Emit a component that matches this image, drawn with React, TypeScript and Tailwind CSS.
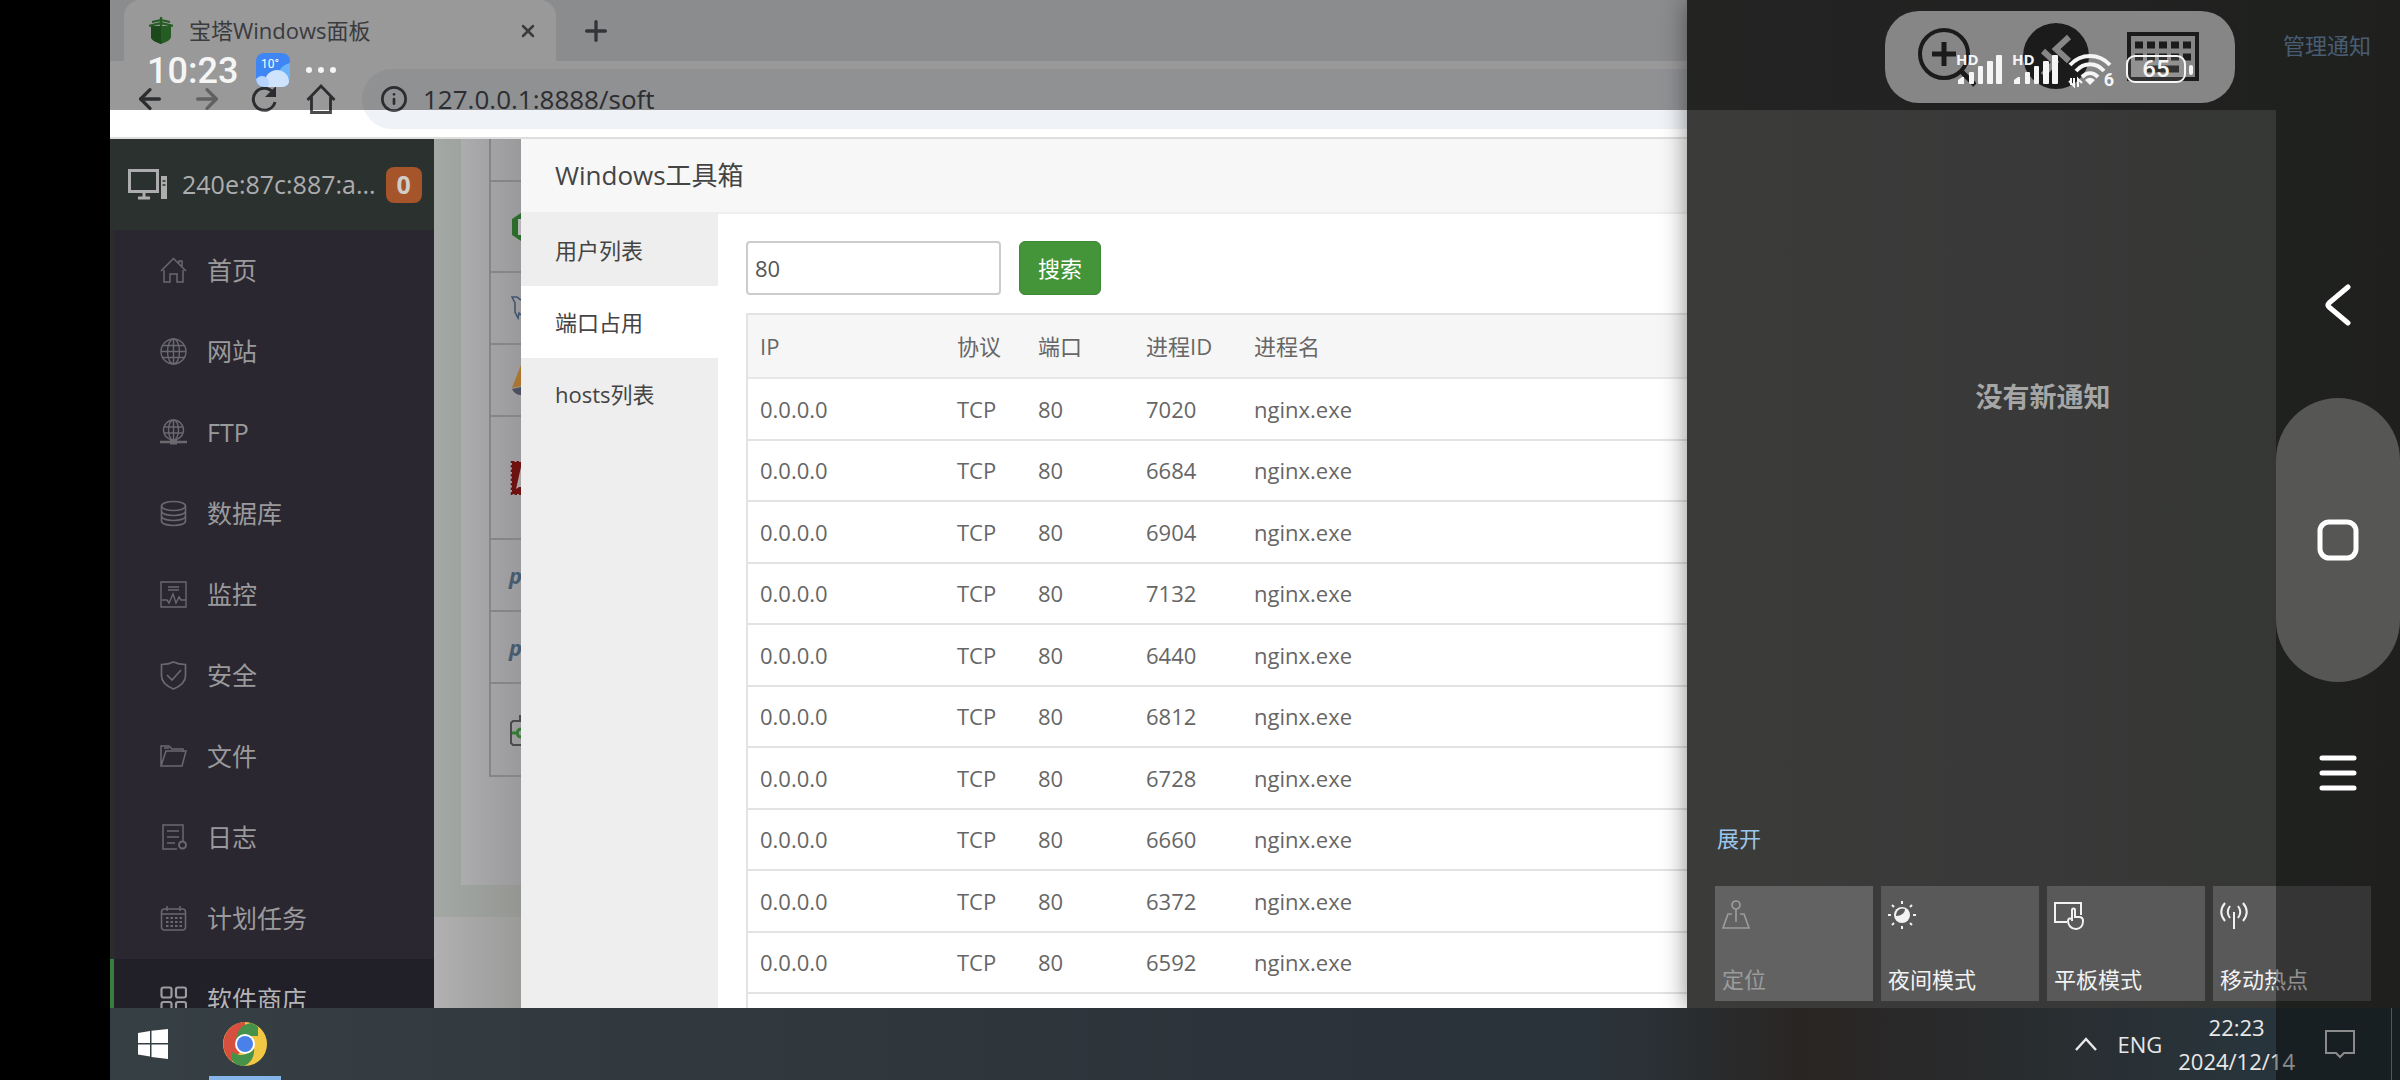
import React from "react";
import { ArrowLeft, ArrowRight, Info, Plus, X } from "lucide-react";

const iconClass = "h-[27px] w-[27px] shrink-0";

const HomeIcon = () => (
  <svg viewBox="0 0 27 27" fill="none" stroke="currentColor" strokeWidth="1.5" className={iconClass}>
    <path d="M1 14 13.500 1.500 26 14M4 13v12h6v-8h7v8h6V13M19 6V4h3v5" />
  </svg>
);

const GlobeIcon = () => (
  <svg viewBox="0 0 27 27" fill="none" stroke="currentColor" strokeWidth="1.4" className={iconClass}>
    <circle cx="13.500" cy="13.500" r="12.500" />
    <ellipse cx="13.500" cy="13.500" rx="6" ry="12.500" />
    <path d="M13.500 1v25M1 13.500h25M3 7.500h21M3 19.500h21" />
  </svg>
);

const FtpIcon = () => (
  <svg viewBox="0 0 27 27" fill="none" stroke="currentColor" strokeWidth="1.4" className={iconClass}>
    <circle cx="13.500" cy="11" r="10" />
    <ellipse cx="13.500" cy="11" rx="5" ry="10" />
    <path d="M13.500 1v20M4 8h19M4 14h19" />
    <path d="M0 23h27" strokeWidth="2.500" />
    <path d="M10 23h7" strokeWidth="5" />
  </svg>
);

const DatabaseIcon = () => (
  <svg viewBox="0 0 27 27" fill="none" stroke="currentColor" strokeWidth="1.6" className={iconClass}>
    <ellipse cx="13.500" cy="6" rx="12" ry="4.500" />
    <path d="M1.500 6v15c0 6 24 6 24 0V6M1.500 11c0 6 24 6 24 0M1.500 16c0 6 24 6 24 0" />
  </svg>
);

const MonitorIcon = () => (
  <svg viewBox="0 0 27 27" fill="none" stroke="currentColor" strokeWidth="1.4" className={iconClass}>
    <path d="M1 1h25v25H1zM8 6h11M8 9h11M2 19h5l2 3 4-9 3 9 3-6 2 3h5" />
  </svg>
);

const ShieldIcon = () => (
  <svg viewBox="0 0 27 29" fill="none" stroke="currentColor" strokeWidth="1.7" className="h-[29px] w-[27px] shrink-0">
    <path d="M13.500 1c4 2 8 2.500 12 2.500V15c0 6-5 10-12 13C6.500 25 1.500 21 1.500 15V3.500C5.500 3.500 9.500 3 13.500 1z" />
    <path d="m7 14 5 5 9-10" />
  </svg>
);

const FolderIcon = () => (
  <svg viewBox="0 0 27 27" fill="none" stroke="currentColor" strokeWidth="1.5" className={iconClass}>
    <path d="M1 23V3h8l3 3h11v3M1 23 6 8h20l-4 15zM4 5h5" />
  </svg>
);

const LogIcon = () => (
  <svg viewBox="0 0 27 27" fill="none" stroke="currentColor" strokeWidth="1.5" className={iconClass}>
    <path d="M17 25H3V1h20v16M7 7h12M7 13h12M7 19h8" />
    <circle cx="22.500" cy="21" r="3.500" strokeWidth="2" />
  </svg>
);

const PlanIcon = () => (
  <svg viewBox="0 0 27 27" fill="none" stroke="currentColor" strokeWidth="1.5" className={iconClass}>
    <rect x="1.500" y="4" width="24" height="21" rx="3" />
    <path d="M2 9h23M7 1v5M20 1v5" />
    <path d="M6 13h16M6 17h16M6 21h16" strokeDasharray="2.500 2" strokeWidth="2" />
  </svg>
);

const StoreIcon = () => (
  <svg viewBox="0 0 27 27" fill="none" stroke="currentColor" strokeWidth="2.200" className={iconClass}>
    <rect x="1.500" y="1.500" width="10" height="10" rx="2" />
    <rect x="16" y="1.500" width="10" height="10" rx="2" />
    <rect x="1.500" y="16" width="10" height="10" rx="2" />
    <rect x="16" y="16" width="10" height="10" rx="2" />
  </svg>
);

const menu = [
  { label: "首页", icon: HomeIcon },
  { label: "网站", icon: GlobeIcon },
  { label: "FTP", icon: FtpIcon },
  { label: "数据库", icon: DatabaseIcon },
  { label: "监控", icon: MonitorIcon },
  { label: "安全", icon: ShieldIcon },
  { label: "文件", icon: FolderIcon },
  { label: "日志", icon: LogIcon },
  { label: "计划任务", icon: PlanIcon },
  { label: "软件商店", icon: StoreIcon, active: true },
];

const pids = [7020, 6684, 6904, 7132, 6440, 6812, 6728, 6660, 6372, 6592];

const BrowserBar: React.FC = () => (
  <header className="shrink-0 border-b-2 border-[#dededf] bg-white">
    <div className="flex h-[61px] bg-[#e8e9ec] pl-[14px]">
      <div className="flex w-[432px] items-center rounded-t-2xl bg-white pl-[25px] pr-[18px] text-[#5f6368]">
        <svg viewBox="0 0 24 27" className="h-[27px] w-6">
          <path d="M2 9h20v11c0 3-5 5-10 7C7 25 2 23 2 20z" fill="#3f9a3c" />
          <path d="M2 9h10v18C7 25 2 23 2 20z" fill="#2e7a2d" />
          <path d="M12 0v9M12 3 3 5M12 3l9 2M12 6 0 9M12 6l12 3" stroke="#3f9a3c" strokeWidth="2.200" />
        </svg>
        <span className="ml-4 flex-1 text-[22px]">宝塔Windows面板</span>
        <button aria-label="关闭标签页">
          <X className="h-5 w-5" strokeWidth={3} />
        </button>
      </div>
      <button aria-label="新标签页" className="ml-6 text-[#55585c]">
        <Plus className="h-8 w-8" strokeWidth={2.5} />
      </button>
    </div>
    <div className="flex h-[76px] items-center gap-[25px] pl-6 text-[#4a4c50]">
      <button aria-label="后退">
        <ArrowLeft className="h-8 w-8" strokeWidth={2.5} />
      </button>
      <button aria-label="前进" className="text-[#a2a2a4]">
        <ArrowRight className="h-8 w-8" strokeWidth={2.5} />
      </button>
      <button aria-label="刷新">
        <svg viewBox="0 0 32 32" fill="none" className="h-8 w-8">
          <path d="M25 9.500A11 11 0 1 0 27 19" stroke="currentColor" strokeWidth="3" />
          <path d="M28 3v11H17z" fill="currentColor" />
        </svg>
      </button>
      <button aria-label="主页">
        <svg viewBox="0 0 32 32" fill="none" stroke="currentColor" strokeWidth="2.800" className="h-8 w-8">
          <path d="M2.500 17 16 3l13.500 14M6.500 14v15.500h19V14" />
        </svg>
      </button>
      <div className="flex h-[60px] flex-1 items-center rounded-l-full bg-[#eff2f6] pl-[18px]">
        <Info className="h-7 w-7" strokeWidth={2.3} />
        <input
          aria-label="地址"
          defaultValue="127.0.0.1:8888/soft"
          className="ml-[15px] w-96 bg-transparent text-[26px] text-[#4a4c50] outline-none"
        />
      </div>
    </div>
  </header>
);

const Sidebar: React.FC = () => (
  <nav className="w-[324px] shrink-0 bg-[#2a2730]">
    <div className="flex h-[91px] items-center bg-[#2b312f] pl-[18px] text-[#adadb0]">
      <svg viewBox="0 0 40 32" fill="none" stroke="currentColor" className="h-8 w-10 shrink-0">
        <rect x="1.500" y="1.500" width="28" height="21" strokeWidth="3" />
        <path d="M10 29h12M16 24v4" strokeWidth="3" />
        <path d="M33 7h6v23h-6z" fill="currentColor" stroke="none" />
        <path d="M34.500 12h3M34.500 16h3" stroke="#2b312f" strokeWidth="1.500" />
      </svg>
      <span className="ml-[14px] text-[25px]">240e:87c:887:a...</span>
      <span className="ml-[10px] flex h-9 w-9 items-center justify-center rounded-lg bg-[#a55529] text-[25px] font-bold text-[#d0cdcb]">
        0
      </span>
    </div>
    {menu.map(({ label, icon: Icon, active }) => (
      <a
        key={label}
        href="#"
        className={
          active
            ? "flex h-[81px] items-center border-l-4 border-[#3b7d3c] bg-[#211f27] pl-[46px] text-[#b4b4b6]"
            : "flex h-[81px] items-center border-l-4 border-[#2b2d2b] pl-[46px] text-[#9a9a9c]"
        }
      >
        <span className={active ? "text-[#9c9c9e]" : "text-[#6a696e]"}>
          <Icon />
        </span>
        <span className="ml-5 text-[25px]">{label}</span>
      </a>
    ))}
  </nav>
);

// strip of the software list that shows beside the dialog
const DimmedPage: React.FC = () => (
  <div className="flex w-[87px] shrink-0 flex-col bg-linear-to-r from-[#b2b0b2] to-[#9a9b99]">
    <div className="h-[778px] bg-linear-to-r from-[#a4a9a5] to-[#949692] pl-[27px]">
      <div className="h-[746px] bg-linear-to-r from-[#acabad] to-[#9a999b] pl-7">
        <div className="h-[638px] border-b-2 border-l-2 border-[#858585]">
          <div className="h-[43px] border-b-2 border-[#858585]" />
          <div className="flex h-[91px] items-center justify-end border-b-2 border-[#858585]">
            <svg viewBox="0 0 9 28" className="h-7 w-[9px]">
              <path d="M9 0 0 6v16l9 6z" fill="#2c6b2c" />
              <path d="M9 6H6v16h3z" fill="#b5b5b5" />
            </svg>
          </div>
          <div className="flex h-[72px] items-center justify-end border-b-2 border-[#858585]">
            <svg viewBox="0 0 10 24" fill="none" stroke="#40566f" strokeWidth="1.600" className="h-6 w-[10px]">
              <path d="M10 4 6 1H1l3 6v9l3 6 1-5 2 2" />
            </svg>
          </div>
          <div className="flex h-[72px] items-center justify-end border-b-2 border-[#858585]">
            <svg viewBox="0 0 9 30" className="h-[30px] w-[9px]">
              <path d="M9 0C6 8 3 15 0 23l9-2z" fill="#a8742f" />
              <path d="M0 24l9-2v8c-4 0-7-2-9-6z" fill="#4c4f5d" />
            </svg>
          </div>
          <div className="flex h-[123px] items-center justify-end border-b-2 border-[#858585]">
            <svg viewBox="0 0 11 34" className="h-[34px] w-[11px]">
              <path d="M2 1h9v32H2z" fill="#6d1210" stroke="#6d1210" strokeWidth="2.500" strokeDasharray="2.500 2" />
              <path d="M11 6v20H9l-3 2z" fill="#a9a4a4" />
            </svg>
          </div>
          <div className="flex h-[72px] items-center justify-end overflow-hidden border-b-2 border-[#858585]">
            <span className="w-3 text-[22px] font-bold italic text-[#465a70]">p</span>
          </div>
          <div className="flex h-[72px] items-center justify-end overflow-hidden border-b-2 border-[#858585]">
            <span className="w-3 text-[22px] font-bold italic text-[#465a70]">p</span>
          </div>
          <div className="flex h-[91px] items-center justify-end">
            <svg viewBox="0 0 11 32" fill="none" className="h-8 w-[11px]">
              <path d="M11 7H3L1 9v20l2 2h8M10 1v6" stroke="#4a4a4c" strokeWidth="2" />
              <path d="M2 19h5M11 15c-5 0-5 8 0 8" stroke="#347a34" strokeWidth="3" />
            </svg>
          </div>
        </div>
      </div>
    </div>
  </div>
);

const Toolbox: React.FC = () => (
  <section className="flex min-w-0 flex-1 flex-col bg-white">
    <h2 className="flex h-[75px] shrink-0 items-center border-b-2 border-[#eeeeee] bg-[#f7f7f7] pl-[34px] text-[26px] text-[#444444]">
      Windows工具箱
    </h2>
    <div className="flex min-h-0 flex-1">
      <div className="flex w-[197px] shrink-0 flex-col bg-[#eeeeee] text-[22px] text-[#444444]">
        <button className="h-[72px] pl-[34px] text-left">用户列表</button>
        <button className="h-[72px] bg-white pl-[34px] text-left">端口占用</button>
        <button className="h-[72px] pl-[34px] text-left">hosts列表</button>
      </div>
      <div className="min-w-0 flex-1 pl-7 pt-[27px]">
        <div className="flex gap-[18px]">
          <input
            aria-label="端口"
            defaultValue="80"
            className="h-[54px] w-[255px] rounded border-2 border-[#cccccc] pl-[7px] text-[22px] text-[#555555] outline-none"
          />
          <button className="h-[54px] w-[82px] rounded-md border border-[#3d8834] bg-[#449539] text-[22px] text-white">
            搜索
          </button>
        </div>
        <table className="mt-[18px] w-full table-fixed border-separate border-spacing-0 border-l-2 border-t-2 border-[#e3e3e3] text-left text-[22px] text-[#666666]">
          <thead>
            <tr className="h-16 bg-[#f6f6f6]">
              <th className="w-[196px] border-b-2 border-[#e8e8e8] pl-3 font-normal">IP</th>
              <th className="w-[81px] border-b-2 border-[#e8e8e8] pl-[13px] font-normal">协议</th>
              <th className="w-[108px] border-b-2 border-[#e8e8e8] pl-[13px] font-normal">端口</th>
              <th className="w-[108px] border-b-2 border-[#e8e8e8] pl-[13px] font-normal">进程ID</th>
              <th className="border-b-2 border-[#e8e8e8] pl-[13px] font-normal">进程名</th>
            </tr>
          </thead>
          <tbody>
            {pids.map((pid) => (
              <tr key={pid} className="h-[61px] odd:h-[62px]">
                <td className="border-b-2 border-[#e3e3e3] pl-3">0.0.0.0</td>
                <td className="border-b-2 border-[#e3e3e3] pl-[13px]">TCP</td>
                <td className="border-b-2 border-[#e3e3e3] pl-[13px]">80</td>
                <td className="border-b-2 border-[#e3e3e3] pl-[13px]">{pid}</td>
                <td className="border-b-2 border-[#e3e3e3] pl-[13px]">nginx.exe</td>
              </tr>
            ))}
            <tr className="h-[61px]">
              <td colSpan={5} />
            </tr>
          </tbody>
        </table>
      </div>
    </div>
  </section>
);

const tileClass =
  "flex h-[115px] flex-1 flex-col items-start justify-between bg-[#595959] pb-[5px] pl-[7px] pt-[14px] text-[22px] text-[#f2f2f2]";

const ActionCenter: React.FC = () => (
  <aside className="z-10 flex w-[713px] shrink-0 flex-col bg-linear-to-r from-[#3b3c3a] via-[#383938] to-[#343633] pb-[7px] pl-7 pr-[29px] shadow-[0_0_24px_rgba(0,0,0,0.450)]">
    <div className="flex h-[91px] items-center justify-end">
      <a href="#" className="text-[22px] text-[#7a9cbe]">管理通知</a>
    </div>
    <p className="mt-[286px] text-center text-[27px] font-bold text-[#a6a6a6]">没有新通知</p>
    <div className="flex-1" />
    <a href="#" className="mb-[31px] ml-[2px] text-[22px] text-[#9cc6ee]">展开</a>
    <div className="flex gap-2">
      <button className="flex h-[115px] flex-1 flex-col items-start justify-between bg-[#636263] pb-[5px] pl-[7px] pt-[14px] text-[22px] text-[#9c9c9c]">
        <svg viewBox="0 0 28 30" fill="none" stroke="currentColor" strokeWidth="1.700" className="h-[30px] w-7">
          <circle cx="14" cy="5" r="4" />
          <path d="M14 9v13M10 14H6L1 28h26l-5-14h-4" />
        </svg>
        定位
      </button>
      <button className={tileClass}>
        <svg viewBox="0 0 28 30" fill="none" stroke="currentColor" strokeWidth="2" className="h-[30px] w-7">
          <circle cx="14" cy="15" r="8" fill="currentColor" stroke="none" />
          <path d="M8 16c5 0 9-3 9-7-4-2-9 1-9 7z" fill="#595959" stroke="none" />
          <path d="M14 1v3M14 26v3M0 15h3M25 15h3M4 5l2 2M24 5l-2 2M4 25l2-2M24 25l-2-2" />
        </svg>
        夜间模式
      </button>
      <button className={tileClass}>
        <svg viewBox="0 0 30 30" fill="none" stroke="currentColor" strokeWidth="2" className="h-[30px] w-[30px]">
          <path d="M13 22H1V3h26v12" />
          <path d="M18 21V10c0-2 3-2 3 0v7h4c3 0 4 1 4 4 0 5-3 8-7 8-5 0-8-4-8-8 0-3 2-3 4-2" />
        </svg>
        平板模式
      </button>
      <button className={tileClass}>
        <svg viewBox="0 0 28 30" fill="none" stroke="currentColor" strokeWidth="2" className="h-[30px] w-7">
          <path d="M14 12v17M10 6c-3 4-3 8 0 12M18 6c3 4 3 8 0 12M5 3c-5 6-5 12 0 18M23 3c5 6 5 12 0 18" />
        </svg>
        移动热点
      </button>
    </div>
  </aside>
);

const Taskbar: React.FC = () => (
  <footer className="flex h-[72px] shrink-0 items-center bg-linear-to-r from-[#363f44] via-[#2c333a] via-50% to-[#28343b]">
    <div className="flex h-full flex-1 items-center">
      <button aria-label="开始" className="ml-7">
        <svg viewBox="0 0 30 30" fill="#ffffff" className="h-[30px] w-[30px]">
          <path d="M0 4l12-2v12H0zM13.500 1.800 30 0v14H13.500zM0 15.500h12v12L0 25.500zM13.500 15.500H30V30l-16.500-2z" />
        </svg>
      </button>
      <button aria-label="Chrome" className="ml-[41px] flex h-full w-[72px] items-center justify-center border-b-4 border-[#86b5ea]">
        <svg viewBox="0 0 44 44" className="mt-1 h-11 w-11">
          <circle cx="22" cy="22" r="22" fill="#f2c744" />
          <path d="M22 0A22 22 0 0 0 9 39.500L17 30 13 20l9-7V0z" fill="#d64f3f" />
          <path d="M13 20C13 9 19 2 28 1c3 1 5 2 7 4v9H22c-4 0-7 2-9 6zM9 30c4 3 10 4 14 2l8-6c1 8-3 15-10 18-6 0-10-3-12-6z" fill="#46924a" />
          <circle cx="22" cy="22" r="10" fill="#ffffff" />
          <circle cx="22" cy="22" r="8" fill="#4a80ea" />
        </svg>
      </button>
    </div>
    <div className="flex h-full w-[800px] items-center justify-end bg-linear-to-r from-transparent via-[#292523] via-25% to-[#28343b] to-80% text-[22px] leading-[34px] text-[#e8e8e8]">
      <button aria-label="显示隐藏的图标">
        <svg viewBox="0 0 22 14" fill="none" stroke="currentColor" strokeWidth="2.500" className="h-[14px] w-[22px]">
          <path d="M1 13 11 2l10 11" />
        </svg>
      </button>
      <span className="ml-5">ENG</span>
      <div className="ml-4 text-center">
        <p>22:23</p>
        <p>2024/12/14</p>
      </div>
      <button aria-label="通知" className="ml-[30px]">
        <svg viewBox="0 0 30 30" fill="none" stroke="currentColor" strokeWidth="2" className="h-[30px] w-[30px]">
          <path d="M1 2h28v22H19l-4 4-4-4H1z" />
        </svg>
      </button>
      <div className="ml-9 mr-2 h-full w-px bg-[#8b9094]" />
    </div>
  </footer>
);

const Signal: React.FC = () => (
  <div className="relative h-8 w-12">
    <span className="absolute left-0 top-0 text-[15px] font-bold leading-3">HD</span>
    <svg viewBox="0 0 48 32" fill="currentColor" className="h-8 w-12">
      <path d="M2 31v-4l4-3h2v7z" />
      <rect x="13" y="19" width="5" height="12" rx="1" />
      <rect x="22" y="13" width="5" height="18" rx="1" />
      <rect x="31" y="8" width="6" height="23" rx="1" />
      <rect x="40" y="2" width="6" height="29" rx="1" />
    </svg>
  </div>
);

const PhoneStatus: React.FC = () => (
  <div className="pointer-events-none absolute left-0 right-0 top-0 z-40 flex h-[110px] pl-[147px] pr-[207px] pt-[53px] text-[#f5f5f5]">
    <span className="font-['Roboto'] text-[36px] font-medium leading-[36px]">10:23</span>
    <svg viewBox="0 0 34 34" className="ml-[18px] h-[34px] w-[34px] rounded-lg">
      <rect width="34" height="34" fill="#3f86f5" />
      <path d="M34 10c-9 2-14 9-14 24h14z" fill="#6bb4fb" />
      <circle cx="21" cy="29" r="12" fill="#cfe3fd" />
      <circle cx="6" cy="30" r="7" fill="#b5d3fc" />
      <text x="5" y="15" fill="#ffffff" className="font-['Roboto'] text-[12px]">10°</text>
    </svg>
    <svg viewBox="0 0 30 6" fill="currentColor" className="ml-4 mt-[14px] h-[6px] w-[30px]">
      <circle cx="3" cy="3" r="3" />
      <circle cx="15" cy="3" r="3" />
      <circle cx="27" cy="3" r="3" />
    </svg>
    <div className="flex flex-1 justify-end gap-2">
      <Signal />
      <Signal />
      <div className="relative h-9 w-[46px]">
        <svg viewBox="0 0 46 36" fill="none" stroke="currentColor" strokeWidth="4" className="h-9 w-[46px]">
          <path d="M2 12c11-12 29-12 40 0M8 18c8-9 20-9 28 0M14 24c5-5 11-5 16 0" />
          <path d="M17 27c4-3 6-3 10 0l-5 5z" fill="currentColor" stroke="none" />
          <path d="M3 25v7M6 25v8l-5-5M10 34v-8l4 4" strokeWidth="2" />
        </svg>
        <span className="absolute bottom-0 right-0 font-['Roboto'] text-[18px] font-bold leading-[18px]">6</span>
      </div>
      <div className="ml-1 flex items-start gap-[3px]">
        <span className="mt-[2px] flex h-7 w-[60px] items-center justify-center rounded-[9px] border-2 border-[#f5f5f5] bg-white/10 font-['Roboto'] text-[24px] font-medium">
          65
        </span>
        <span className="mt-3 h-[10px] w-1 rounded-sm bg-[#f5f5f5]" />
      </div>
    </div>
  </div>
);

const FloatingTools: React.FC = () => (
  <div className="absolute right-[165px] top-[11px] z-30 flex h-[92px] w-[350px] justify-between rounded-[34px] bg-[#868686] pl-[33px] pr-9 pt-3 text-[#1b1b1b]">
    <button aria-label="放大" className="h-[66px]">
      <svg viewBox="0 0 58 66" fill="none" stroke="currentColor" strokeWidth="4" className="h-[66px] w-[58px]">
        <circle cx="26" cy="31" r="24" />
        <path d="M26 19v24M14 31h24" strokeWidth="5" />
        <path d="m43 48 14 14" strokeWidth="5" />
      </svg>
    </button>
    <button aria-label="远程桌面" className="ml-2 h-[66px]">
      <svg viewBox="0 0 66 66" fill="none" className="h-[66px] w-[66px]">
        <circle cx="33" cy="33" r="33" fill="currentColor" />
        <path d="M46 14 33 26l13 12M20 28l12 11-12 13" stroke="#868686" strokeWidth="6" />
      </svg>
    </button>
    <button aria-label="键盘" className="h-[66px]">
      <svg viewBox="0 0 72 66" fill="none" stroke="currentColor" className="h-[66px] w-[72px]">
        <rect x="2" y="11" width="68" height="45" strokeWidth="4" />
        <path d="M8 22h56M8 34h56" strokeWidth="7" strokeDasharray="8 4" />
        <path d="M20 46h32" strokeWidth="7" />
      </svg>
    </button>
  </div>
);

const PhoneNav: React.FC = () => (
  <div className="absolute bottom-0 right-0 top-[110px] z-20 flex w-[124px] flex-col items-center bg-black/40">
    <button aria-label="返回" className="mt-[173px]">
      <svg viewBox="0 0 28 44" fill="none" stroke="#ffffff" strokeWidth="5" strokeLinecap="round" strokeLinejoin="round" className="h-11 w-7">
        <path d="M24 4 5 20q-2 2 0 4l19 16" />
      </svg>
    </button>
    <button aria-label="主屏幕" className="mt-[71px] flex h-[284px] w-full items-center justify-center rounded-full bg-[#565654]">
      <svg viewBox="0 0 42 42" fill="none" stroke="#ffffff" strokeWidth="5" className="h-[42px] w-[42px]">
        <rect x="3" y="3" width="36" height="36" rx="9" />
      </svg>
    </button>
    <button aria-label="最近任务" className="mt-[71px]">
      <svg viewBox="0 0 40 40" stroke="#ffffff" strokeWidth="5" strokeLinecap="round" className="h-10 w-10">
        <path d="M4 5h32M4 20h32M4 35h32" />
      </svg>
    </button>
  </div>
);

const App: React.FC = () => {
  return (
    <div className="relative flex h-screen w-full overflow-hidden bg-black pl-[110px] font-['Open_Sans','Noto_Sans_CJK_SC',sans-serif]">
      <div className="flex min-w-0 flex-1 flex-col">
        <div className="flex min-h-0 flex-1 overflow-hidden">
          <main className="flex min-w-0 flex-1 flex-col">
            <BrowserBar />
            <div className="flex min-h-0 flex-1 overflow-hidden">
              <Sidebar />
              <DimmedPage />
              <Toolbox />
            </div>
          </main>
          <ActionCenter />
        </div>
        <Taskbar />
      </div>
      <div className="pointer-events-none absolute left-[110px] right-0 top-0 z-20 h-[110px] bg-black/40" />
      <PhoneNav />
      <FloatingTools />
      <PhoneStatus />
    </div>
  );
};

export default App;
